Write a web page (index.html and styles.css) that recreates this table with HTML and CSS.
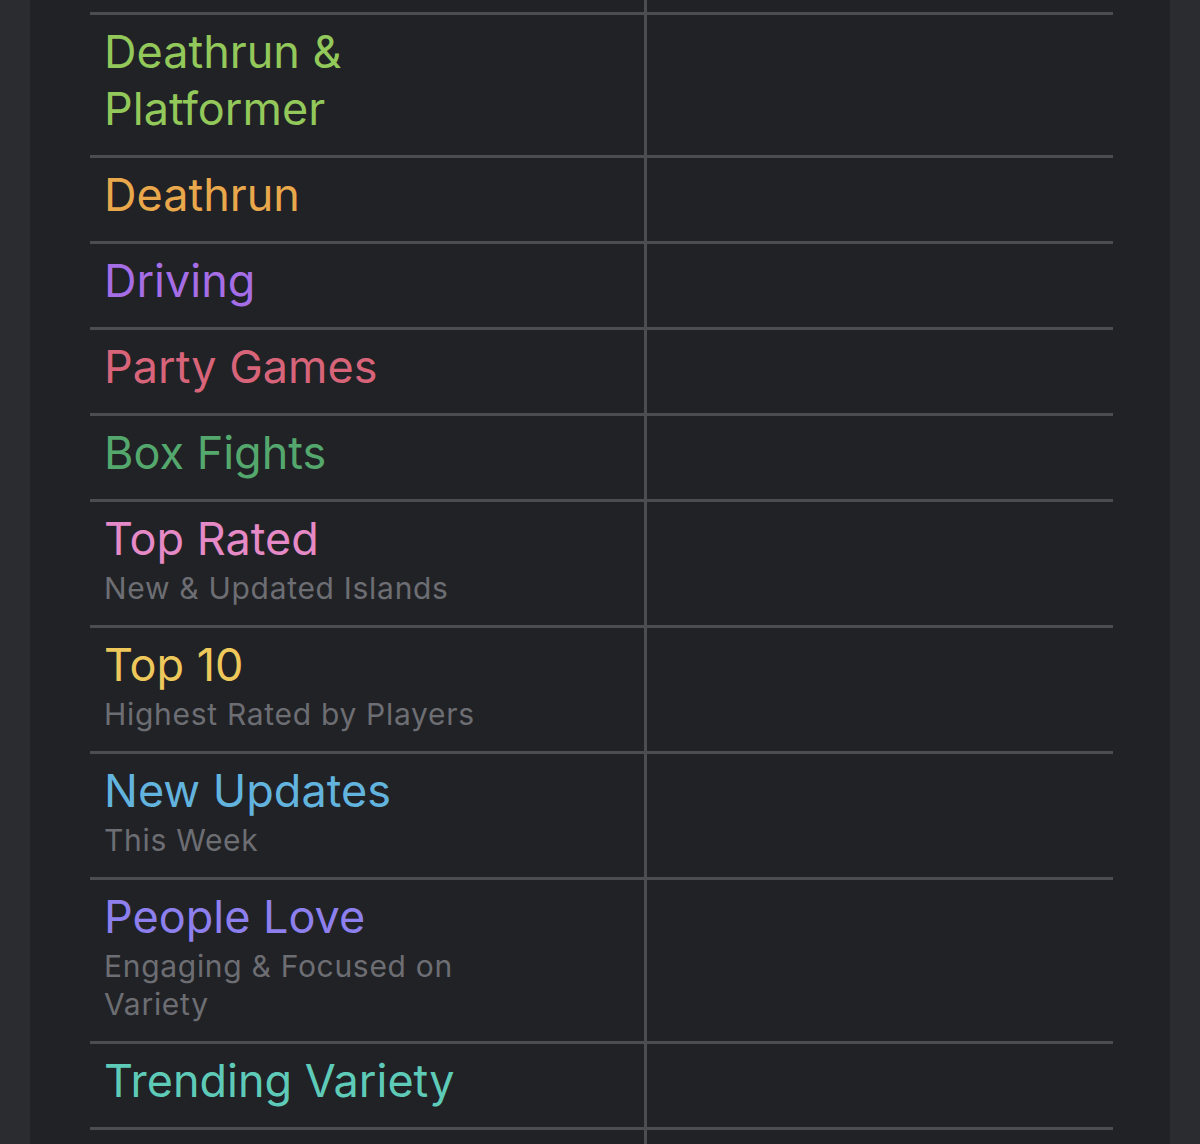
FILE: index.html
```html
<!DOCTYPE html>
<html lang="en">
<head>
  <meta charset="UTF-8" />
  <meta name="viewport" content="width=device-width, initial-scale=1" />
  <title>Island Categories</title>
  <link rel="stylesheet" href="styles.css">
</head>
<body>

  <main class="panel">
    <div class="table">

      <div class="row">
        <div class="cell">
          <div class="title green">Deathrun &amp;<br>Platformer</div>
        </div>
        <div class="cell"></div>
      </div>

      <div class="row">
        <div class="cell">
          <div class="title orange">Deathrun</div>
        </div>
        <div class="cell"></div>
      </div>

      <div class="row">
        <div class="cell">
          <div class="title purple">Driving</div>
        </div>
        <div class="cell"></div>
      </div>

      <div class="row">
        <div class="cell">
          <div class="title rose">Party Games</div>
        </div>
        <div class="cell"></div>
      </div>

      <div class="row">
        <div class="cell">
          <div class="title emerald">Box Fights</div>
        </div>
        <div class="cell"></div>
      </div>

      <div class="row">
        <div class="cell">
          <div class="title pink">Top Rated</div>
          <div class="subtitle">New &amp; Updated Islands</div>
        </div>
        <div class="cell"></div>
      </div>

      <div class="row">
        <div class="cell">
          <div class="title yellow">Top 10</div>
          <div class="subtitle">Highest Rated by Players</div>
        </div>
        <div class="cell"></div>
      </div>

      <div class="row">
        <div class="cell">
          <div class="title blue">New Updates</div>
          <div class="subtitle">This Week</div>
        </div>
        <div class="cell"></div>
      </div>

      <div class="row">
        <div class="cell">
          <div class="title lavender">People Love</div>
          <div class="subtitle">Engaging &amp; Focused on<br>Variety</div>
        </div>
        <div class="cell"></div>
      </div>

      <div class="row last">
        <div class="cell">
          <div class="title teal">Trending Variety</div>
        </div>
        <div class="cell"></div>
      </div>

    </div>
  </main>

</body>
</html>
```

FILE: styles.css
```css
/* Reset */
* {
  margin: 0;
  padding: 0;
  box-sizing: border-box;
}

:root {
  --color-page: #2b2c30;
  --color-panel: #212226;
  --color-line: #4c4d51;
  --color-sub: #6d6e73;
}

html, body {
  height: 100%;
  font-family: 'Inter', 'Noto Sans', sans-serif;
  background: var(--color-page);
  overflow: hidden;
}

/* Main panel, the column divider runs through its full height */
.panel {
  margin: 0 30px;
  height: 1144px;
  padding: 12px 0 0 60px;
  background:
    linear-gradient(var(--color-line), var(--color-line)) no-repeat 614px 0 / 3px 100%,
    var(--color-panel);
}

.table {
  width: 1023px;
}

.row {
  display: grid;
  grid-template-columns: 554px 1fr;
  border-top: 3px solid var(--color-line);
}

.row.last {
  border-bottom: 3px solid var(--color-line);
}

.cell {
  padding: 8px 14px 18px;
}

.title {
  font-size: 45px;
  line-height: 57px;
  font-weight: 400;
}

.subtitle {
  font-size: 30px;
  line-height: 38px;
  color: var(--color-sub);
  margin-top: 2px;
  letter-spacing: 0.7px;
}

.green { color: #93c85a; }
.orange { color: #e9a84b; }
.purple { color: #a66ee6; }
.rose { color: #d8647a; }
.emerald { color: #54a86d; }
.pink { color: #e58ac6; }
.yellow { color: #eec85b; }
.blue { color: #62b4df; }
.lavender { color: #8d80ee; }
.teal { color: #5ecbb8; }
```
